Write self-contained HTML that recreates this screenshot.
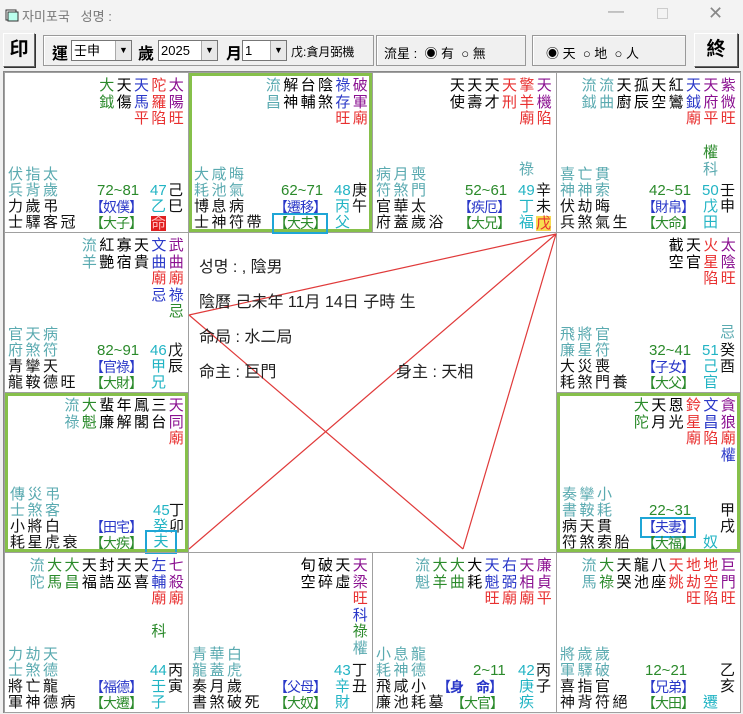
<!DOCTYPE html>
<html><head><meta charset="utf-8">
<style>
*{margin:0;padding:0;box-sizing:border-box}
body{width:743px;height:714px;background:#f0f0f0;font-family:"Liberation Sans","Noto Sans CJK TC",sans-serif;position:relative;overflow:hidden}
.title{position:absolute;left:0;top:0;width:743px;height:30px;background:#f3f3f3;color:#777;font-size:13px;font-family:"Liberation Sans","Noto Sans CJK KR",sans-serif}
.tb{position:absolute;font-size:14px;color:#000}
.btn{position:absolute;background:#f0f0f0;border:1px solid #fff;border-right-color:#666;border-bottom-color:#666;box-shadow:1px 1px 0 #333;font-weight:bold;font-size:19px;text-align:center;line-height:32px}
.grp{position:absolute;border:1px solid #999;box-shadow:inset 1px 1px 0 #fff;top:35px;height:31px}
.sel{position:absolute;top:40px;height:21px;background:#fff;border:1px solid #777;font-size:13px;line-height:19px;padding-left:2px}
.sel i{position:absolute;right:0;top:0;width:16px;height:19px;background:#e8e8e8;border-left:1px solid #aaa;font-style:normal;font-size:9px;text-align:center}
.grid{position:absolute;left:3px;top:71px;width:738px;height:642px;background:#fff;border:1px solid #888}
.cell{position:absolute;width:185px;height:161px;border:1px solid #a0a0a0;font-size:15px;line-height:16.6px}
.grn{box-shadow:inset 0 0 0 3px #86c04a}
.st{position:absolute;top:5px;right:3px;display:flex}
.st div{width:17.4px;text-align:center}
.st span{display:block;height:16.6px}
.a{position:absolute;white-space:nowrap}
.lt{letter-spacing:2.5px}
.p{color:#8a1090}.r{color:#e83030}.b{color:#2a38c8}.g{color:#2b8a2b}.t{color:#5aaab0}.k{color:#111}.c{color:#22b4c4}
.bk{font-size:14px;letter-spacing:-1px}
.box{outline:2px solid #1fa6d6}
.center{position:absolute;font-size:16px;color:#222;white-space:nowrap}
</style></head><body>
<div class="title">
<svg style="position:absolute;left:5px;top:8px" width="14" height="14"><rect x="1" y="2" width="10" height="10" fill="#fff" stroke="#333"/><rect x="3" y="4" width="10" height="9" fill="#bfe" stroke="#333"/></svg>
<span style="position:absolute;left:22px;top:6px">자미포국&nbsp;&nbsp;&nbsp;성명 :</span>
<span style="position:absolute;left:608px;top:3px;font-size:16px;color:#999">—</span>
<span style="position:absolute;left:657px;top:8px;width:11px;height:11px;border:1px solid #ccc"></span>
<span style="position:absolute;left:708px;top:3px;font-size:18px;color:#888">✕</span>
</div>
<div class="btn" style="left:3px;top:33px;width:32px;height:34px">印</div>
<div class="grp" style="left:43px;width:331px"></div>
<div class="tb" style="left:52px;top:40px;font-weight:bold;font-size:16px">運</div>
<div class="sel" style="left:71px;width:61px">壬申<i>▼</i></div>
<div class="tb" style="left:138px;top:40px;font-weight:bold;font-size:16px">歲</div>
<div class="sel" style="left:158px;width:60px">2025<i>▼</i></div>
<div class="tb" style="left:226px;top:40px;font-weight:bold;font-size:16px">月</div>
<div class="sel" style="left:242px;width:45px">1<i>▼</i></div>
<div class="tb" style="left:291px;top:43px;font-size:12px">戊:貪月弼機</div>
<div class="grp" style="left:376px;width:150px"></div>
<div class="tb" style="left:384px;top:43px;font-size:13px">流星 : &nbsp;◉ 有 &nbsp;○ 無</div>
<div class="grp" style="left:532px;width:154px"></div>
<div class="tb" style="left:546px;top:43px;font-size:13px">◉ 天 &nbsp;○ 地 &nbsp;○ 人</div>
<div class="btn" style="left:694px;top:33px;width:44px;height:34px">終</div>

<div class="grid">
<!-- row 0 -->
<div class="cell" style="left:0;top:0">
<div class="st"><div><span class="g">大</span><span class="g">鉞</span></div><div><span>天</span><span>傷</span></div><div><span class="b">天</span><span class="b">馬</span><span class="r">平</span></div><div><span class="r">陀</span><span class="r">羅</span><span class="r">陷</span></div><div><span class="p">太</span><span class="p">陽</span><span class="r">旺</span></div></div>
<div class="a t lt" style="left:3px;top:94px">伏指太</div><div class="a t lt" style="left:3px;top:110px">兵背歲</div><div class="a k lt" style="left:3px;top:126px">力歲弔</div><div class="a k lt" style="left:3px;top:142px">士驛客冠</div>
<div class="a g" style="left:92px;top:110px">72~81</div><div class="a b bk" style="left:85px;top:126px">【奴僕】</div><div class="a g bk" style="left:85px;top:142px">【大子】</div>
<div class="a c" style="left:145px;top:110px">47</div><div class="a k" style="left:163px;top:110px">己</div><div class="a c" style="left:146px;top:126px">乙</div><div class="a k" style="left:163px;top:126px">巳</div><div class="a" style="left:146px;top:143px;background:#e02020;color:#fbb;line-height:15px">命</div>
</div>
<div class="cell grn" style="left:184px;top:0">
<div class="st"><div><span class="t">流</span><span class="t">昌</span></div><div><span>解</span><span>神</span></div><div><span>台</span><span>輔</span></div><div><span>陰</span><span>煞</span></div><div><span class="b">祿</span><span class="b">存</span><span class="r">旺</span></div><div><span class="p">破</span><span class="p">軍</span><span class="r">廟</span></div></div>
<div class="a t lt" style="left:5px;top:94px">大咸晦</div><div class="a t lt" style="left:5px;top:110px">耗池氣</div><div class="a k lt" style="left:5px;top:126px">博息病</div><div class="a k lt" style="left:5px;top:142px">士神符帶</div>
<div class="a g" style="left:92px;top:110px">62~71</div><div class="a b bk" style="left:85px;top:126px">【遷移】</div><div class="a g bk box" style="left:85px;top:142px">【大夫】</div>
<div class="a c" style="left:145px;top:110px">48</div><div class="a k" style="left:163px;top:110px">庚</div><div class="a c" style="left:146px;top:126px">丙</div><div class="a k" style="left:163px;top:126px">午</div><div class="a c" style="left:146px;top:142px">父</div>
</div>
<div class="cell" style="left:368px;top:0">
<div class="st"><div><span>天</span><span>使</span></div><div><span>天</span><span>壽</span></div><div><span>天</span><span>才</span></div><div><span class="r">天</span><span class="r">刑</span></div><div><span class="r">擎</span><span class="r">羊</span><span class="r">廟</span></div><div><span class="p">天</span><span class="p">機</span><span class="r">陷</span></div></div>
<div class="a t lt" style="left:3px;top:94px">病月喪</div><div class="a t lt" style="left:3px;top:110px">符煞門</div><div class="a k lt" style="left:3px;top:126px">官華太</div><div class="a k lt" style="left:3px;top:142px">府蓋歲浴</div>
<div class="a g" style="left:92px;top:110px">52~61</div><div class="a b bk" style="left:85px;top:126px">【疾厄】</div><div class="a g bk" style="left:85px;top:142px">【大兄】</div>
<div class="a t" style="left:146px;top:89px">祿</div>
<div class="a c" style="left:145px;top:110px">49</div><div class="a k" style="left:163px;top:110px">辛</div><div class="a c" style="left:146px;top:126px">丁</div><div class="a k" style="left:163px;top:126px">未</div><div class="a c" style="left:146px;top:142px">福</div><div class="a r" style="left:163px;top:143px;background:#f8dc50;line-height:15px">戊</div>
</div>
<div class="cell" style="left:552px;top:0">
<div class="st"><div><span class="t">流</span><span class="t">鉞</span></div><div><span class="t">流</span><span class="t">曲</span></div><div><span>天</span><span>廚</span></div><div><span>孤</span><span>辰</span></div><div><span>天</span><span>空</span></div><div><span>紅</span><span>鸞</span></div><div><span class="b">天</span><span class="b">鉞</span><span class="r">廟</span></div><div><span class="p">天</span><span class="p">府</span><span class="r">平</span></div><div><span class="p">紫</span><span class="p">微</span><span class="r">旺</span></div></div>
<div class="a t lt" style="left:3px;top:94px">喜亡貫</div><div class="a t lt" style="left:3px;top:110px">神神索</div><div class="a k lt" style="left:3px;top:126px">伏劫晦</div><div class="a k lt" style="left:3px;top:142px">兵煞氣生</div>
<div class="a g" style="left:92px;top:110px">42~51</div><div class="a b bk" style="left:85px;top:126px">【財帛】</div><div class="a g bk" style="left:85px;top:142px">【大命】</div>
<div class="a g" style="left:146px;top:72px">權</div><div class="a t" style="left:146px;top:89px">科</div>
<div class="a c" style="left:145px;top:110px">50</div><div class="a k" style="left:163px;top:110px">壬</div><div class="a c" style="left:146px;top:126px">戊</div><div class="a k" style="left:163px;top:126px">申</div><div class="a c" style="left:146px;top:142px">田</div>
</div>
<!-- row 1 -->
<div class="cell" style="left:0;top:160px">
<div class="st"><div><span class="t">流</span><span class="t">羊</span></div><div><span>紅</span><span>艷</span></div><div><span>寡</span><span>宿</span></div><div><span>天</span><span>貴</span></div><div><span class="b">文</span><span class="b">曲</span><span class="r">廟</span><span class="b">忌</span></div><div><span class="p">武</span><span class="p">曲</span><span class="r">廟</span><span class="b">祿</span><span class="g">忌</span></div></div>
<div class="a t lt" style="left:3px;top:94px">官天病</div><div class="a t lt" style="left:3px;top:110px">府煞符</div><div class="a k lt" style="left:3px;top:126px">青攣天</div><div class="a k lt" style="left:3px;top:142px">龍鞍德旺</div>
<div class="a g" style="left:92px;top:110px">82~91</div><div class="a b bk" style="left:85px;top:126px">【官祿】</div><div class="a g bk" style="left:85px;top:142px">【大財】</div>
<div class="a c" style="left:145px;top:110px">46</div><div class="a k" style="left:163px;top:110px">戊</div><div class="a c" style="left:146px;top:126px">甲</div><div class="a k" style="left:163px;top:126px">辰</div><div class="a c" style="left:146px;top:142px">兄</div>
</div>
<div class="cell" style="left:552px;top:160px">
<div class="st"><div><span>截</span><span>空</span></div><div><span>天</span><span>官</span></div><div><span class="r">火</span><span class="r">星</span><span class="r">陷</span></div><div><span class="p">太</span><span class="p">陰</span><span class="r">旺</span></div></div>
<div class="a t lt" style="left:3px;top:94px">飛將官</div><div class="a t lt" style="left:3px;top:110px">廉星符</div><div class="a k lt" style="left:3px;top:126px">大災喪</div><div class="a k lt" style="left:3px;top:142px">耗煞門養</div>
<div class="a g" style="left:92px;top:110px">32~41</div><div class="a b bk" style="left:85px;top:126px">【子女】</div><div class="a g bk" style="left:85px;top:142px">【大父】</div>
<div class="a t" style="left:163px;top:92px">忌</div>
<div class="a c" style="left:145px;top:110px">51</div><div class="a k" style="left:163px;top:110px">癸</div><div class="a c" style="left:146px;top:126px">己</div><div class="a k" style="left:163px;top:126px">酉</div><div class="a c" style="left:146px;top:142px">官</div>
</div>
<!-- row 2 -->
<div class="cell grn" style="left:0;top:320px">
<div class="st"><div><span class="t">流</span><span class="t">祿</span></div><div><span class="g">大</span><span class="g">魁</span></div><div><span>蜚</span><span>廉</span></div><div><span>年</span><span>解</span></div><div><span>鳳</span><span>閣</span></div><div><span>三</span><span>台</span></div><div><span class="p">天</span><span class="p">同</span><span class="r">廟</span></div></div>
<div class="a t lt" style="left:5px;top:94px">傳災弔</div><div class="a t lt" style="left:5px;top:110px">士煞客</div><div class="a k lt" style="left:5px;top:126px">小將白</div><div class="a k lt" style="left:5px;top:142px">耗星虎衰</div>
<div class="a b bk" style="left:85px;top:126px">【田宅】</div><div class="a g bk" style="left:85px;top:142px">【大疾】</div>
<div class="a c" style="left:148px;top:110px">45</div><div class="a k" style="left:164px;top:110px">丁</div><div class="a c" style="left:148px;top:126px">癸</div><div class="a k" style="left:164px;top:126px">卯</div><div class="a c box" style="left:142px;top:139px;width:28px;height:20px;text-align:center;line-height:20px">夫</div>
</div>
<div class="cell grn" style="left:552px;top:320px">
<div class="st"><div><span class="g">大</span><span class="g">陀</span></div><div><span>天</span><span>月</span></div><div><span>恩</span><span>光</span></div><div><span class="r">鈴</span><span class="r">星</span><span class="r">廟</span></div><div><span class="b">文</span><span class="b">昌</span><span class="r">陷</span></div><div><span class="p">貪</span><span class="p">狼</span><span class="r">廟</span><span class="b">權</span></div></div>
<div class="a t lt" style="left:5px;top:94px">奏攣小</div><div class="a t lt" style="left:5px;top:110px">書鞍耗</div><div class="a k lt" style="left:5px;top:126px">病天貫</div><div class="a k lt" style="left:5px;top:142px">符煞索胎</div>
<div class="a g" style="left:92px;top:110px">22~31</div><div class="a b bk box" style="left:85px;top:126px">【夫妻】</div><div class="a g bk" style="left:85px;top:142px">【大福】</div>
<div class="a k" style="left:163px;top:110px">甲</div><div class="a k" style="left:163px;top:126px">戌</div><div class="a c" style="left:146px;top:142px">奴</div>
</div>
<!-- row 3 -->
<div class="cell" style="left:0;top:480px">
<div class="st"><div><span class="t">流</span><span class="t">陀</span></div><div><span class="g">大</span><span class="g">馬</span></div><div><span class="g">大</span><span class="g">昌</span></div><div><span>天</span><span>福</span></div><div><span>封</span><span>誥</span></div><div><span>天</span><span>巫</span></div><div><span>天</span><span>喜</span></div><div><span class="b">左</span><span class="b">輔</span><span class="r">廟</span><span></span><span class="g">科</span></div><div><span class="p">七</span><span class="p">殺</span><span class="r">廟</span></div></div>
<div class="a t lt" style="left:3px;top:94px">力劫天</div><div class="a t lt" style="left:3px;top:110px">士煞德</div><div class="a k lt" style="left:3px;top:126px">將亡龍</div><div class="a k lt" style="left:3px;top:142px">軍神德病</div>
<div class="a b bk" style="left:85px;top:126px">【福德】</div><div class="a g bk" style="left:85px;top:142px">【大遷】</div>
<div class="a c" style="left:145px;top:110px">44</div><div class="a k" style="left:163px;top:110px">丙</div><div class="a c" style="left:146px;top:126px">壬</div><div class="a k" style="left:163px;top:126px">寅</div><div class="a c" style="left:146px;top:142px">子</div>
</div>
<div class="cell" style="left:184px;top:480px">
<div class="st"><div><span>旬</span><span>空</span></div><div><span>破</span><span>碎</span></div><div><span>天</span><span>虛</span></div><div><span class="p">天</span><span class="p">梁</span><span class="r">旺</span><span class="b">科</span><span class="g">祿</span><span class="t">權</span></div></div>
<div class="a t lt" style="left:3px;top:94px">青華白</div><div class="a t lt" style="left:3px;top:110px">龍蓋虎</div><div class="a k lt" style="left:3px;top:126px">奏月歲</div><div class="a k lt" style="left:3px;top:142px">書煞破死</div>
<div class="a b bk" style="left:85px;top:126px">【父母】</div><div class="a g bk" style="left:85px;top:142px">【大奴】</div>
<div class="a c" style="left:145px;top:110px">43</div><div class="a k" style="left:163px;top:110px">丁</div><div class="a c" style="left:146px;top:126px">辛</div><div class="a k" style="left:163px;top:126px">丑</div><div class="a c" style="left:146px;top:142px">財</div>
</div>
<div class="cell" style="left:368px;top:480px">
<div class="st"><div><span class="t">流</span><span class="t">魁</span></div><div><span class="g">大</span><span class="g">羊</span></div><div><span class="g">大</span><span class="g">曲</span></div><div><span>大</span><span>耗</span></div><div><span class="b">天</span><span class="b">魁</span><span class="r">旺</span></div><div><span class="b">右</span><span class="b">弼</span><span class="r">廟</span></div><div><span class="p">天</span><span class="p">相</span><span class="r">廟</span></div><div><span class="p">廉</span><span class="p">貞</span><span class="r">平</span></div></div>
<div class="a t lt" style="left:3px;top:94px">小息龍</div><div class="a t lt" style="left:3px;top:110px">耗神德</div><div class="a k lt" style="left:3px;top:126px">飛咸小</div><div class="a k lt" style="left:3px;top:142px">廉池耗墓</div>
<div class="a g" style="left:100px;top:110px">2~11</div><div class="a b bk" style="left:64px;top:126px;font-weight:bold">【身　命】</div><div class="a g bk" style="left:78px;top:142px">【大官】</div>
<div class="a c" style="left:145px;top:110px">42</div><div class="a k" style="left:163px;top:110px">丙</div><div class="a c" style="left:146px;top:126px">庚</div><div class="a k" style="left:163px;top:126px">子</div><div class="a c" style="left:146px;top:142px">疾</div>
</div>
<div class="cell" style="left:552px;top:480px">
<div class="st"><div><span class="t">流</span><span class="t">馬</span></div><div><span class="g">大</span><span class="g">祿</span></div><div><span>天</span><span>哭</span></div><div><span>龍</span><span>池</span></div><div><span>八</span><span>座</span></div><div><span class="r">天</span><span class="r">姚</span></div><div><span class="r">地</span><span class="r">劫</span><span class="r">旺</span></div><div><span class="r">地</span><span class="r">空</span><span class="r">陷</span></div><div><span class="p">巨</span><span class="p">門</span><span class="r">旺</span></div></div>
<div class="a t lt" style="left:3px;top:94px">將歲歲</div><div class="a t lt" style="left:3px;top:110px">軍驛破</div><div class="a k lt" style="left:3px;top:126px">喜指官</div><div class="a k lt" style="left:3px;top:142px">神背符絕</div>
<div class="a g" style="left:88px;top:110px">12~21</div><div class="a b bk" style="left:85px;top:126px">【兄弟】</div><div class="a g bk" style="left:85px;top:142px">【大田】</div>
<div class="a k" style="left:163px;top:110px">乙</div><div class="a k" style="left:163px;top:126px">亥</div><div class="a c" style="left:146px;top:142px">遷</div>
</div>
<!-- center -->
<svg style="position:absolute;left:0;top:0" width="738" height="642"><g stroke="#e03a3a" stroke-width="1.2" fill="none"><line x1="552" y1="162" x2="185" y2="243"/><line x1="185" y1="243" x2="459" y2="477"/><line x1="552" y1="162" x2="459" y2="477"/><line x1="552" y1="162" x2="185" y2="477"/></g></svg>
<div class="center" style="left:195px;top:181px;font-family:'Liberation Sans','Noto Sans CJK KR',sans-serif">성명 : , 陰男</div>
<div class="center" style="left:195px;top:216px">陰曆 己未年 11月 14日 子時 生</div>
<div class="center" style="left:195px;top:251px">命局 : 水二局</div>
<div class="center" style="left:195px;top:286px">命主 : 巨門</div>
<div class="center" style="left:392px;top:286px">身主 : 天相</div>
</div>
</body></html>
